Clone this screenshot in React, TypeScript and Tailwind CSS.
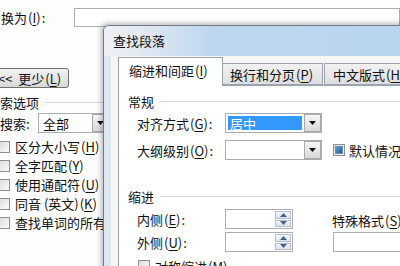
import React from 'react';

const font = { fontFamily: '"Noto Sans CJK SC", "Noto Sans", sans-serif' };

function Mn({ c }: { c: string }) {
  return (
    <span className="px-[1px]">
      (<span className="underline underline-offset-2">{c}</span>)
    </span>
  );
}

function Check({ indeterminate }: { indeterminate?: boolean }) {
  return (
    <div className="w-[12px] h-[12px] shrink-0 border border-[#8e8f8f] bg-gradient-to-br from-[#dcdcdc] to-[#fbfbfb] flex items-center justify-center">
      {indeterminate && <div className="w-[8px] h-[8px] bg-gradient-to-br from-[#5fa0d6] to-[#1c5f9a] border border-[#6b8fb0]" />}
    </div>
  );
}

function DropBtn() {
  return (
    <div className="w-[17px] shrink-0 h-full border border-[#a9a9a9] bg-gradient-to-b from-[#f6f6f6] to-[#d9d9d9] flex items-center justify-center">
      <svg width="7" height="4" viewBox="0 0 7 4">
        <path d="M0 0H7L3.5 4Z" fill="#111" />
      </svg>
    </div>
  );
}

function Select({ children, w, btn = true }: { children?: React.ReactNode; w: string; btn?: boolean }) {
  return (
    <div className={`${w} shrink-0 h-[20px] border border-[#abadb3] bg-white flex items-stretch`}>
      <div className="flex-1 p-[2px] flex">{children}</div>
      {btn && <DropBtn />}
    </div>
  );
}

function Spin() {
  return (
    <div className="w-[68px] shrink-0 h-[20px] border border-[#abadb3] bg-white flex justify-end p-[1px]">
      <div className="w-[16px] h-full flex flex-col gap-[1px]">
        <div className="flex-1 border border-[#b5c0cc] bg-gradient-to-b from-[#f4f7fa] to-[#dbe3ec] flex items-center justify-center">
          <svg width="7" height="4" viewBox="0 0 7 4"><path d="M0 4H7L3.5 0Z" fill="#44618a" /></svg>
        </div>
        <div className="flex-1 border border-[#b5c0cc] bg-gradient-to-b from-[#f4f7fa] to-[#dbe3ec] flex items-center justify-center">
          <svg width="7" height="4" viewBox="0 0 7 4"><path d="M0 0H7L3.5 4Z" fill="#44618a" /></svg>
        </div>
      </div>
    </div>
  );
}

function Group({ title, line }: { title: string; line: string }) {
  return (
    <div className="h-[16px] flex items-center">
      <span className="shrink-0">{title}</span>
      <div className={`${line} h-px bg-[#d5dadf]`} />
    </div>
  );
}

export default function App() {
  const checks: [string, string][] = [
    ['区分大小写', 'H'],
    ['全字匹配', 'Y'],
    ['使用通配符', 'U'],
    ['同音 (英文)', 'K'],
    ['查找单词的所有形式', ''],
  ];

  return (
    <div className="relative w-[400px] h-[266px] overflow-hidden bg-[#fdfdfd] text-[13px] leading-none text-[#111]" style={font}>
      {/* background: find & replace dialog */}
      <div className="flex flex-col">
        <div className="mt-[8px] h-[19px] flex items-center">
          <div className="w-[74px] shrink-0 pl-[1px]">换为<Mn c="I" />:</div>
          <div className="flex-1 h-full border border-[#abadb3] bg-white" />
        </div>
        <div className="mt-[41px] ml-[-4px] w-[73px] h-[20px] border border-[#707070] rounded-[3px] bg-gradient-to-b from-[#f3f3f3] to-[#d8d8d8] flex items-center pl-[1px] whitespace-nowrap">
          &lt;&lt;&nbsp;&nbsp;更少<Mn c="L" />
        </div>
        <div className="mt-[6px]">
          <Group title="索选项" line="ml-[6px] w-[60px]" />
        </div>
        <div className="mt-[3px] h-[20px] flex items-center">
          <div className="w-[38px] shrink-0">搜索:</div>
          <Select w="w-[72px]">
            <span className="pl-[2px] self-center">全部</span>
          </Select>
        </div>
        <div className="mt-[4px] flex flex-col">
          {checks.map(([t, k]) => (
            <div key={t} className="h-[19px] flex items-center ml-[-2px] gap-[5px]">
              <Check />
              <span className="whitespace-nowrap">
                {t}
                {k && <Mn c={k} />}
              </span>
            </div>
          ))}
        </div>
      </div>

      {/* front: 查找段落 window */}
      <div className="absolute left-[103px] top-[25px] w-[320px] h-[262px] border border-[#6f7a88] rounded-tl-[6px] bg-[#dfe7ef] shadow-[-2px_-2px_5px_rgba(0,0,0,0.25)] flex flex-col">
        <div className="h-[30px] shrink-0 flex items-center pl-[9px] pb-[2px] rounded-tl-[5px] bg-[linear-gradient(to_right,#eceff3_4%,#bed7ef_34%,#b9d4ee)]">
          查找段落
        </div>
        <div className="flex-1 ml-[7px] bg-[#f6f6f6] pt-[1px] pl-[7px] flex flex-col">
          <div className="h-[28px] flex items-end relative z-10">
            <div className="w-[105px] shrink-0 h-[29px] mb-[-1px] border border-b-0 border-[#9aa4ae] bg-white flex items-center pl-[10px] pb-[3px]">
              缩进和间距<Mn c="I" />
            </div>
            <div className="w-[100px] shrink-0 h-[22px] border border-l-0 border-[#9aa4ae] bg-gradient-to-b from-[#f2f2f2] to-[#dedede] flex items-center pl-[7px]">
              换行和分页<Mn c="P" />
            </div>
            <div className="w-[100px] shrink-0 h-[22px] ml-[1px] border border-[#9aa4ae] bg-gradient-to-b from-[#f2f2f2] to-[#dedede] flex items-center pl-[8px] whitespace-nowrap">
              中文版式<Mn c="H" />
            </div>
          </div>
          <div className="flex-1 border border-[#9aa4ae] bg-white pl-[9px] pt-[7px] flex flex-col">
            <Group title="常规" line="ml-[6px] flex-1" />
            <div className="mt-[4px] h-[20px] flex items-center pl-[9px]">
              <div className="w-[88px] shrink-0">对齐方式<Mn c="G" />:</div>
              <Select w="w-[97px]">
                <div className="flex-1 bg-[#3399ff] text-white flex items-center pl-[2px]">居中</div>
              </Select>
            </div>
            <div className="mt-[7px] h-[20px] flex items-center pl-[9px]">
              <div className="w-[88px] shrink-0">大纲级别<Mn c="O" />:</div>
              <Select w="w-[97px]" />
              <div className="ml-[11px] shrink-0 flex items-center gap-[4px] whitespace-nowrap">
                <Check indeterminate />
                <span>默认情况下折叠</span>
              </div>
            </div>
            <div className="mt-[28px]">
              <Group title="缩进" line="ml-[6px] flex-1" />
            </div>
            <div className="mt-[5px] h-[20px] flex items-center pl-[9px]">
              <div className="w-[88px] shrink-0">内侧<Mn c="E" />:</div>
              <Spin />
              <div className="ml-[39px] mt-[3px] shrink-0 whitespace-nowrap">特殊格式<Mn c="S" />:</div>
            </div>
            <div className="mt-[3px] h-[20px] flex items-center pl-[9px]">
              <div className="w-[88px] shrink-0">外侧<Mn c="U" />:</div>
              <Spin />
              <div className="ml-[40px] w-[90px] shrink-0 h-[20px] border border-[#abadb3] bg-white" />
            </div>
            <div className="mt-[6px] h-[16px] flex items-center pl-[10px] gap-[5px] whitespace-nowrap">
              <Check />
              <span>对称缩进<Mn c="M" /></span>
            </div>
          </div>
        </div>
      </div>
    </div>
  );
}
